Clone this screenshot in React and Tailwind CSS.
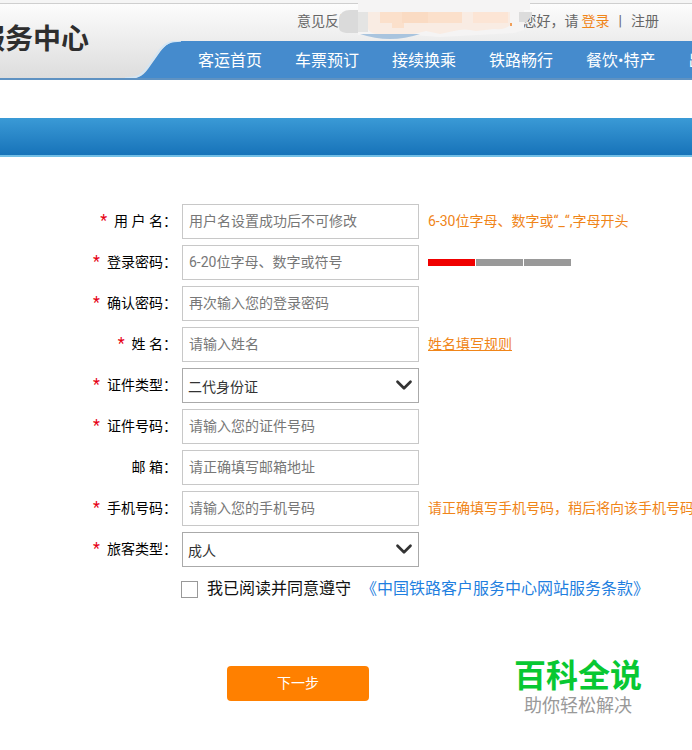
import { ChevronDown } from 'lucide-react'

const navItems = ['客运首页', '车票预订', '接续换乘', '铁路畅行', '餐饮•特产', '出行指南']

const fields = [
  { id: 'username', label: '用 户 名', required: true, placeholder: '用户名设置成功后不可修改', hint: '6-30位字母、数字或“_“,字母开头' },
  { id: 'password', label: '登录密码', required: true, type: 'password', placeholder: '6-20位字母、数字或符号', strength: true },
  { id: 'confirm', label: '确认密码', required: true, type: 'password', placeholder: '再次输入您的登录密码' },
  { id: 'name', label: '姓 名', required: true, placeholder: '请输入姓名', link: '姓名填写规则' },
  { id: 'idType', label: '证件类型', required: true, options: ['二代身份证'] },
  { id: 'idNumber', label: '证件号码', required: true, placeholder: '请输入您的证件号码' },
  { id: 'email', label: '邮 箱', type: 'email', placeholder: '请正确填写邮箱地址' },
  { id: 'phone', label: '手机号码', required: true, type: 'tel', placeholder: '请输入您的手机号码', hint: '请正确填写手机号码，稍后将向该手机号码发送短信验证码' },
  { id: 'passenger', label: '旅客类型', required: true, options: ['成人', '儿童', '学生'] },
]

function Smudge() {
  return (
    <svg className="pointer-events-none absolute top-0 left-[336px]" width="200" height="42" viewBox="0 0 200 42" aria-hidden="true">
      <path d="M22 0 H194 V10 H188 V30 L178 33 L104 37 L78 35 H22Z" fill="#f5f4f4" />
      <path d="M24 34 Q54 44 84 34Z" fill="#a9c4de" />
      <path d="M3 18 Q5 10 14 10 H22 V33 H10 Q3 32 3 28Z" fill="#dadada" />
      <path d="M22 12 H32 V32 H22Z" fill="#e4e4e3" />
      <path d="M32 12 H174 V25 Q170 30 158 29 L140 31 Q128 28 118 31 L104 34 L90 31 L78 34 H40 Q32 32 32 28Z" fill="#f9ece3" />
      <path d="M44 12 H126 V23 H68 V28 H56 V23 H44Z" fill="#fbe0cb" />
      <path d="M66 12 H92 V23 H66Z" fill="#fadbc3" />
      <path d="M137 12 H172 V23 H137Z" fill="#fce5d5" />
      <path d="M174 23 h2 v3 h-2Z" fill="#f0a05a" />
      <path d="M183 12 H196 V16 L190 22 H183Z" fill="#dcdcdc" />
    </svg>
  )
}

function Header() {
  return (
    <header className="relative overflow-hidden bg-linear-to-b from-[#fefefe] to-[#dcdcdc]">
      <div className="h-1 border-b border-[#cfcfcf] bg-[#f5f5f5]" />
      <div className="flex">
        <div className="flex w-[125px] shrink-0 items-center justify-end pr-9 pb-1">
          <span className="text-[28px] leading-8 font-bold whitespace-nowrap text-[#2e2e2e]">服务中心</span>
        </div>
        <div className="flex min-w-0 flex-1 flex-col">
          <div className="flex h-[37px] items-center pr-[33px] pb-1 pl-[172px] text-sm whitespace-nowrap text-[#666]">
            <a href="#feedback">意见反馈</a>
            <span className="ml-auto">您好，请</span>
            <a href="#login" className="ml-[3px] text-[#f08519]">登录</a>
            <span className="mx-[9px]">|</span>
            <a href="#register">注册</a>
          </div>
          <div className="flex">
            <svg className="shrink-0" width="56" height="39" viewBox="0 0 56 39" aria-hidden="true">
              <path d="M0 38 C12 38 17 36 23 28 L35 11 C41 3 46 0 56 0 V39 H0Z" fill="#458bcd" />
              <path d="M0 37 C12 37 16 35 22 27 L34 10 C40 2 46 0 56 0" fill="none" stroke="#d3e6f5" strokeWidth="1.5" />
            </svg>
            <nav className="flex flex-1 items-center gap-[33px] bg-[#458bcd] pl-[17px] text-base whitespace-nowrap text-white">
              {navItems.map((item) => (
                <a key={item} href="#nav">{item}</a>
              ))}
            </nav>
          </div>
        </div>
      </div>
      <div className="absolute bottom-0 left-0 h-0.5 w-full bg-[#5f92c2]" />
      <Smudge />
    </header>
  )
}

function StrengthMeter() {
  return (
    <div className="flex gap-px" role="img" aria-label="弱">
      <span className="h-[7px] w-[47px] bg-[#f00000]" />
      <span className="h-[7px] w-[47px] bg-[#999]" />
      <span className="h-[7px] w-[47px] bg-[#999]" />
    </div>
  )
}

function Field({ field }) {
  return (
    <div className="flex h-[35px] items-center text-sm whitespace-nowrap">
      <label htmlFor={field.id} className="w-[177px] shrink-0 pb-0.5 text-right text-black">
        {field.required && <span className="mr-[7px] text-base text-[#e60012]">*</span>}
        {field.label}：
      </label>
      {field.options ? (
        <div className="relative ml-[5px] h-full w-[237px] shrink-0">
          <select id={field.id} className="h-full w-full appearance-none border border-[#aaa] bg-white pt-0.5 pl-[5px] text-[#333]">
            {field.options.map((option) => (
              <option key={option}>{option}</option>
            ))}
          </select>
          <ChevronDown className="pointer-events-none absolute top-1 right-0.5 size-[26px] text-[#333]" strokeWidth={2.5} />
        </div>
      ) : (
        <input
          id={field.id}
          type={field.type || 'text'}
          placeholder={field.placeholder}
          className="ml-[5px] h-full w-[237px] shrink-0 border border-[#c8c8c8] bg-white px-1.5 pb-0.5 placeholder:text-[#777]"
        />
      )}
      <div className={field.strength ? 'ml-[9px]' : 'ml-[9px] pb-0.5 text-[#f08519]'}>
        {field.hint}
        {field.strength && <StrengthMeter />}
        {field.link && <a href="#rules" className="underline">{field.link}</a>}
      </div>
    </div>
  )
}

export default function App() {
  return (
    <div className="min-h-screen overflow-hidden bg-white font-[Roboto,'Noto_Sans_CJK_SC',sans-serif]">
      <Header />
      <div className="mt-[38px] h-[39px] border-b-2 border-[#72bfe6] bg-linear-to-b from-[#3a9ad6] to-[#1673b9]" />
      <form className="mt-[47px]" onSubmit={(e) => e.preventDefault()}>
        <div className="flex flex-col gap-1.5">
          {fields.map((field) => (
            <Field key={field.id} field={field} />
          ))}
        </div>
        <div className="mt-2.5 flex items-center pl-[181px] text-base whitespace-nowrap text-[#111]">
          <input id="agree" type="checkbox" className="size-[17px] shrink-0 appearance-none border border-[#999] bg-white checked:bg-[#458bcd]" />
          <label htmlFor="agree" className="ml-[9px]">我已阅读并同意遵守</label>
          <a href="#terms" className="ml-2.5 text-[#1f7fe0]">《中国铁路客户服务中心网站服务条款》</a>
        </div>
        <div className="mt-[57px] flex items-start justify-between pr-[50px] pl-[227px]">
          <button type="submit" className="mt-2 h-[35px] w-[142px] rounded bg-[#ff8000] pb-0.5 text-sm text-white">下一步</button>
          <div className="text-center whitespace-nowrap">
            <p className="text-[32px] leading-9 font-bold text-[#08c832]">百科全说</p>
            <p className="text-lg leading-6 text-[#999]">助你轻松解决</p>
          </div>
        </div>
      </form>
    </div>
  )
}
